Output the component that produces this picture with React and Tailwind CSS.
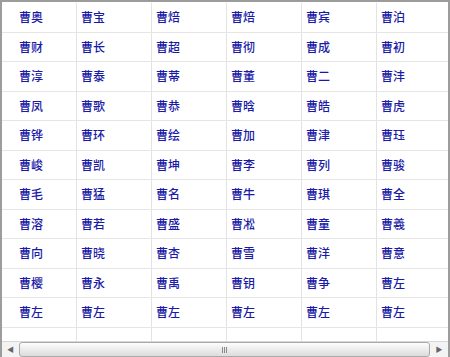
import React from 'react';

const names = [
    ['曹奥', '曹宝', '曹焙', '曹焙', '曹宾', '曹泊'],
    ['曹财', '曹长', '曹超', '曹彻', '曹成', '曹初'],
    ['曹淳', '曹泰', '曹蒂', '曹董', '曹二', '曹沣'],
    ['曹凤', '曹歌', '曹恭', '曹晗', '曹皓', '曹虎'],
    ['曹铧', '曹环', '曹绘', '曹加', '曹津', '曹珏'],
    ['曹峻', '曹凯', '曹坤', '曹李', '曹列', '曹骏'],
    ['曹毛', '曹猛', '曹名', '曹牛', '曹琪', '曹全'],
    ['曹溶', '曹若', '曹盛', '曹凇', '曹童', '曹羲'],
    ['曹向', '曹晓', '曹杏', '曹雪', '曹洋', '曹意'],
    ['曹樱', '曹永', '曹禹', '曹钥', '曹争', '曹左'],
    ['曹左', '曹左', '曹左', '曹左', '曹左', '曹左'],
];

const colWidths = ['w-[75px]', 'w-[75px]', 'w-[75px]', 'w-[75px]', 'w-[75px]', 'flex-1'];

function Cell({ index, children }) {
    const pad = index === 0 ? 'pl-[17px]' : 'pl-[4px]';
    const divider = index < 5 ? 'border-r border-[#e3e3e3]' : '';
    return (
        <div className={`${colWidths[index]} ${pad} ${divider} flex h-full items-center`}>
            {children}
        </div>
    );
}

function Row({ items }) {
    return (
        <div className="flex h-[29.5px] border-b border-[#e6e6e6]">
            {items.map((name, i) => (
                <Cell key={i} index={i}>
                    {name}
                </Cell>
            ))}
        </div>
    );
}

function ScrollBar() {
    return (
        <div className="flex h-[16px] items-stretch border-t border-[#d8d8d8] bg-[#f3f3f3]">
            <div className="flex w-[17px] items-center justify-center text-[7px] text-[#666]">◀</div>
            <div className="flex flex-1 items-center justify-center rounded-[3px] border border-[#aaaaaa] bg-gradient-to-b from-[#fdfdfd] to-[#dcdcdc]">
                <div className="flex gap-[1px]">
                    <span className="h-[6px] w-[1px] bg-[#888]" />
                    <span className="h-[6px] w-[1px] bg-[#888]" />
                    <span className="h-[6px] w-[1px] bg-[#888]" />
                </div>
            </div>
            <div className="flex w-[18px] items-center justify-center text-[7px] text-[#666]">▶</div>
        </div>
    );
}

export default function App() {
    return (
        <div
            className="flex h-[357px] w-[450px] flex-col overflow-hidden border-x-2 border-t-2 border-[#9c9c9c] bg-white text-[12px] font-medium text-[#1a1aa6]"
            style={{ fontFamily: '"Noto Sans CJK SC", "Liberation Sans", sans-serif' }}
        >
            <div className="flex-1 overflow-hidden pt-[1px]">
                {names.map((row, i) => (
                    <Row key={i} items={row} />
                ))}
                <div className="flex h-[29.5px]">
                    {[0, 1, 2, 3, 4, 5].map((i) => (
                        <Cell key={i} index={i} />
                    ))}
                </div>
            </div>
            <ScrollBar />
        </div>
    );
}
